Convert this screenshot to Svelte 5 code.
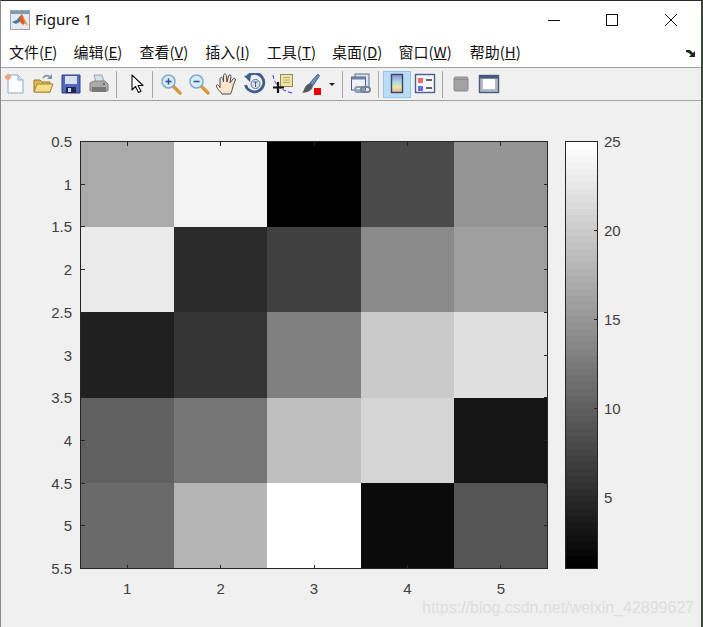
<script>
	// magic(5) shown with the gray colormap
	const magic = [
		[17, 24, 1, 8, 15],
		[23, 5, 7, 14, 16],
		[4, 6, 13, 20, 22],
		[10, 12, 19, 21, 3],
		[11, 18, 25, 2, 9],
	];
	const left = 80.5;
	const right = 547.5;
	const top = 141.5;
	const bottom = 568.5;
	const cw = (right - left) / 5;
	const ch = (bottom - top) / 5;

	function gray(v) {
		const c = Math.round(((v - 1) / 24) * 255);
		return `rgb(${c},${c},${c})`;
	}

	const yLabels = ["0.5", "1", "1.5", "2", "2.5", "3", "3.5", "4", "4.5", "5", "5.5"];
	const xLabels = [1, 2, 3, 4, 5];
	const barTicks = [5, 10, 15, 20, 25];
	const barSteps = Array.from({ length: 64 }, (_, i) => i);
	const barY = (v) => bottom - ((v - 1) / 24) * (bottom - top);

	const menus = [
		["文件", "F", 16],
		["编辑", "E", 17],
		["查看", "V", 17],
		["插入", "I", 17],
		["工具", "T", 16],
		["桌面", "D", 16],
		["窗口", "W", 18],
		["帮助", "H", 0],
	];
</script>

<div class="window">
	<header class="title">
		<svg class="logo" width="20" height="20" viewBox="0 0 20 20">
			<rect x="0.5" y="0.5" width="19" height="19" fill="#e6e9ed" stroke="#a0a4aa" />
			<rect x="1" y="1" width="18" height="3" fill="#7f9ab4" />
			<path d="M2 12l5-2 3-4 2-2 3 6 3 6-3-3-2 2-3-3-3 1z" fill="#d9622b" />
			<path d="M2 12l5-2 3-4-1 6-3 2z" fill="#3d7fb5" />
			<path d="M12 4l3 6 3 6-3-3z" fill="#f2a23a" />
		</svg>
		<span class="name">Figure 1</span>
		<div class="controls">
			<svg width="14" height="14" viewBox="0 0 14 14" class="min"><path d="M1 7.5h12" stroke="#111" /></svg>
			<svg width="14" height="14" viewBox="0 0 14 14" class="max"><rect x="1.5" y="1.5" width="11" height="11" fill="none" stroke="#111" /></svg>
			<svg width="14" height="14" viewBox="0 0 14 14" class="close"><path d="M1 1l12 12M13 1L1 13" stroke="#111" /></svg>
		</div>
	</header>

	<nav class="menu">
		{#each menus as [label, key, gap]}
			<span class="item" style="margin-right: {gap}px">{label}(<u>{key}</u>)</span>
		{/each}
		<svg class="dock" width="10" height="9" viewBox="0 0 10 9"><path d="M0 1l4 0 3 3 2-2v6H3l2-2-2-2-3-1z" fill="#222" /></svg>
	</nav>

	<div class="toolbar">
		<button>
			<svg width="22" height="22" viewBox="0 0 22 22">
				<path d="M4 2h10l5 5v13H4z" fill="#fbfdff" stroke="#8aa8cc" />
				<path d="M14 2v5h5" fill="#d6e4f5" stroke="#8aa8cc" />
				<circle cx="4" cy="4" r="2.6" fill="#ee8f5c" />
				<path d="M4 0v8M0 4h8" stroke="#f2b38e" />
			</svg>
		</button>
		<button>
			<svg width="22" height="22" viewBox="0 0 22 22">
				<path d="M2 7h6l2 2h8v10H2z" fill="#e0b94e" stroke="#9a7a26" />
				<path d="M2 19l3-8h16l-3 8z" fill="#f6de8b" stroke="#a8862e" />
				<path d="M11 5c2-3 5-3 7-1" fill="none" stroke="#7d93a8" stroke-width="1.6" />
				<path d="M20 1v5h-5z" fill="#7d93a8" />
			</svg>
		</button>
		<button>
			<svg width="22" height="22" viewBox="0 0 22 22">
				<path d="M2 2h18v18H2z" fill="#5468bc" stroke="#2f3d88" />
				<rect x="5" y="3" width="12" height="8" fill="#d8dff0" />
				<rect x="6" y="14" width="10" height="6" fill="#23274f" />
				<rect x="8" y="15" width="3" height="4" fill="#cfd6e6" />
			</svg>
		</button>
		<button>
			<svg width="22" height="22" viewBox="0 0 22 22">
				<path d="M6 2h8l2 7H8z" fill="#d5e2ea" stroke="#9aa6ae" />
				<path d="M2 10l4-2h11l3 3v7H2z" fill="#a9abab" stroke="#808080" />
				<rect x="4" y="14" width="14" height="5" fill="#787a7a" />
				<circle cx="16" cy="11" r="1" fill="#555" />
			</svg>
		</button>

		<span class="sep"></span>

		<button class="pointer">
			<svg width="22" height="22" viewBox="0 0 22 22">
				<path d="M6 2v15l3.500-3.500 3 6 2.500-1.300-3-5.700h5z" fill="#fff" stroke="#111" stroke-width="1.100" stroke-linejoin="round" />
			</svg>
		</button>

		<span class="sep"></span>

		<button>
			<svg width="22" height="22" viewBox="0 0 22 22">
				<path d="M13 13l7 7" stroke="#d6983c" stroke-width="3.400" stroke-linecap="round" />
				<circle cx="8.500" cy="8.500" r="6.500" fill="#d6ebf8" stroke="#86aaca" stroke-width="1.500" />
				<path d="M5.500 8.500h6M8.500 5.500v6" stroke="#2c4f8c" stroke-width="1.500" />
			</svg>
		</button>
		<button>
			<svg width="22" height="22" viewBox="0 0 22 22">
				<path d="M13 13l7 7" stroke="#d6983c" stroke-width="3.400" stroke-linecap="round" />
				<circle cx="8.500" cy="8.500" r="6.500" fill="#d6ebf8" stroke="#86aaca" stroke-width="1.500" />
				<path d="M5.500 8.500h6" stroke="#2c4f8c" stroke-width="1.500" />
			</svg>
		</button>
		<button>
			<svg width="22" height="22" viewBox="0 0 22 22">
				<path d="M6 21c-2-3-6-6-5.500-8.500s3 1 3.500 2V6c0-2.200 2.500-2.200 3 0l.5 3V2.500c0-2 2.800-2 2.800 0L11 9l1.500-6c.5-1.800 2.800-1.500 2.500.4L14 10l3-4c1-1.400 3-.5 2.400 1L17 13c-.5 3-1.500 6-2.500 8z" fill="#fbe3cc" stroke="#4a4a55" stroke-linejoin="round" />
			</svg>
		</button>
		<button>
			<svg width="22" height="22" viewBox="0 0 22 22">
				<path d="M3 4a9.300 9.300 0 1 1-1.500 8" fill="none" stroke="#3e5f8e" stroke-width="2.800" />
				<path d="M0 3l7-1-1 7z" fill="#3e5f8e" />
				<circle cx="11.500" cy="11" r="4.500" fill="#d6dfea" stroke="#5b7396" />
				<path d="M9.500 9h4M11.500 9v5" stroke="#3e5f8e" />
			</svg>
		</button>
		<button>
			<svg width="22" height="22" viewBox="0 0 22 22">
				<path d="M1 2c1 8 6 15 19 18" fill="none" stroke="#3b3bd0" stroke-dasharray="4 2" />
				<rect x="8.500" y="1.500" width="12" height="12" fill="#f3e6a4" stroke="#8e8a62" />
				<path d="M11 4.500h7M11 7h7M11 9.500h7" stroke="#b4ad78" />
				<path d="M6 9v11M1 14.500h11" stroke="#111" stroke-width="2.200" />
			</svg>
		</button>
		<button>
			<svg width="22" height="22" viewBox="0 0 22 22">
				<path d="M10 10l7-8c1-1.200 3-.2 2 1.500l-6 9z" fill="#6f8fc6" stroke="#44597f" />
				<path d="M10 10l3 3c-.5 3-3 5-5.500 6L2 20c2.500-2 2-8 8-10z" fill="#55585c" />
				<rect x="14" y="15" width="7" height="7" fill="#f00000" />
			</svg>
		</button>
		<svg class="caret" width="14" height="22" viewBox="0 0 14 22"><path d="M4 10h6l-3 3z" fill="#222" /></svg>

		<span class="sep"></span>

		<button>
			<svg width="22" height="22" viewBox="0 0 22 22">
				<rect x="5" y="1" width="14" height="13" fill="#dfe4ee" stroke="#5a6c8e" />
				<rect x="1.500" y="4" width="14" height="13" fill="#eef1f6" stroke="#4c5f84" />
				<rect x="1.500" y="4" width="14" height="2.500" fill="#6f82a5" />
				<rect x="5" y="14" width="9" height="5" rx="2.500" fill="none" stroke="#8d9bb0" stroke-width="2" />
				<rect x="11" y="14" width="9" height="5" rx="2.500" fill="none" stroke="#75859e" stroke-width="2" />
			</svg>
		</button>

		<span class="sep"></span>

		<button class="active">
			<svg width="22" height="22" viewBox="0 0 22 22">
				<defs>
					<linearGradient id="rainbow" x1="0" y1="0" x2="0" y2="1">
						<stop offset="0" stop-color="#8f8fd8" />
						<stop offset="0.4" stop-color="#a8d8e0" />
						<stop offset="0.7" stop-color="#e8e8a8" />
						<stop offset="1" stop-color="#f0a898" />
					</linearGradient>
				</defs>
				<rect x="5.500" y="1.500" width="11" height="18" fill="url(#rainbow)" stroke="#3c4664" stroke-width="1.400" />
			</svg>
		</button>
		<button>
			<svg width="22" height="22" viewBox="0 0 22 22">
				<rect x="1.500" y="1.500" width="19" height="18" fill="#f4f6fa" stroke="#4c5f84" stroke-width="1.400" />
				<rect x="4" y="5" width="5" height="5" fill="#ee6a6a" />
				<rect x="4" y="13" width="5" height="5" fill="#6a6ae8" />
				<path d="M12 7h6M12 15h6" stroke="#333" stroke-width="1.500" />
			</svg>
		</button>

		<span class="sep"></span>

		<button>
			<svg width="22" height="22" viewBox="0 0 22 22">
				<rect x="4" y="4" width="14" height="14" rx="1.500" fill="#a2a2a2" stroke="#8a8a8a" />
				<path d="M4 6.500h14" stroke="#8a8a8a" />
			</svg>
		</button>
		<button>
			<svg width="22" height="22" viewBox="0 0 22 22">
				<rect x="1.500" y="2.500" width="19" height="17" fill="#b4b9c4" stroke="#46597e" stroke-width="1.400" />
				<rect x="1.500" y="2.500" width="19" height="3" fill="#46597e" />
				<rect x="5" y="6" width="12" height="10" fill="#fff" />
			</svg>
		</button>
	</div>

	<main class="figure">
		<svg class="plot" width="700" height="526" viewBox="1 101 700 526">
			<g shape-rendering="crispEdges">
				{#each magic as row, r}
					{#each row as v, c}
						<rect x={left + c * cw} y={top + r * ch} width={cw + 0.5} height={ch + 0.5} fill={gray(v)} />
					{/each}
				{/each}
				{#each barSteps as i}
					<rect x="565.500" y={bottom - ((i + 1) / 64) * (bottom - top)} width="32" height={(bottom - top) / 64 + 0.6} fill={gray(1 + (i / 63) * 24)} />
				{/each}
				<rect x={left} y={top} width={right - left} height={bottom - top} fill="none" stroke="#262626" />
				<rect x="565.500" y={top} width="32" height={bottom - top} fill="none" stroke="#262626" />
				{#each yLabels as _, i}
					{@const y = top + (i * (bottom - top)) / 10}
					<path d="M{left} {y}h4M{right} {y}h-4" stroke="#262626" />
				{/each}
				{#each xLabels as n}
					{@const x = left + (n - 0.5) * cw}
					<path d="M{x} {top}v4M{x} {bottom}v-4" stroke="#262626" />
				{/each}
				{#each barTicks as v}
					<path d="M597.500 {barY(v)}h-4" stroke="#262626" />
				{/each}
			</g>
			{#each yLabels as label, i}
				<text class="tick" x="72" y={top + (i * (bottom - top)) / 10 + 5.500} text-anchor="end">{label}</text>
			{/each}
			{#each xLabels as n}
				<text class="tick" x={left + (n - 0.5) * cw} y="594" text-anchor="middle">{n}</text>
			{/each}
			{#each barTicks as v}
				<text class="tick" x="604" y={barY(v) + 5.500}>{v}</text>
			{/each}
		</svg>
		<span class="mark">https://blog.csdn.net/weixin_42899627</span>
	</main>
</div>

<style>
	:global(body) {
		margin: 0;
		background: #f0f0f0;
	}
	.window {
		width: 703px;
		height: 627px;
		box-sizing: border-box;
		overflow: hidden;
		display: flex;
		flex-direction: column;
		border-top: 1px solid #2b2a28;
		border-left: 1px solid #8a8a8a;
		border-right: 2px solid #3f443f;
		font-family: "Noto Sans", sans-serif;
		color: #111;
		background: #f0f0f0;
	}
	.title {
		height: 37px;
		flex: none;
		background: #fff;
		display: flex;
		align-items: center;
		padding-left: 9px;
		box-sizing: border-box;
	}
	.logo {
		margin-right: 5px;
	}
	.name {
		font-size: 15px;
		margin-top: -2px;
	}
	.controls {
		margin-left: auto;
		display: flex;
	}
	.controls svg {
		display: block;
	}
	.min {
		margin-right: 44px;
	}
	.max {
		margin-right: 45px;
	}
	.close {
		margin-right: 23px;
	}
	.menu {
		height: 29px;
		flex: none;
		box-sizing: content-box;
		background: #fff;
		display: flex;
		align-items: center;
		padding-left: 8px;
		border-bottom: 1px solid #a3a3a3;
		font-family: "Noto Sans CJK SC", "Noto Sans", sans-serif;
		font-size: 15px;
		color: #111;
	}
	.item {
		white-space: nowrap;
		margin-top: -2px;
	}
	.dock {
		margin-left: auto;
		margin-right: 5px;
		margin-top: 2px;
	}
	.toolbar {
		height: 32px;
		flex: none;
		display: flex;
		align-items: center;
		border-bottom: 1px solid #a3a3a3;
		background: #f0f0f0;
	}
	.toolbar button {
		width: 28px;
		height: 27px;
		padding: 0;
		border: 1px solid transparent;
		background: none;
		display: flex;
		align-items: center;
		justify-content: center;
		box-sizing: border-box;
		flex: none;
	}
	.toolbar .pointer {
		margin: 0 -2px 0 2px;
	}
	.toolbar .active {
		background: #bcdcf4;
		border-color: #8ec6f0;
	}
	.sep {
		width: 1px;
		height: 27px;
		background: #a8a8a8;
		margin: 0 4px 0 3px;
		flex: none;
	}
	.caret {
		flex: none;
	}
	.figure {
		flex: 1;
		position: relative;
	}
	.plot {
		display: block;
	}
	.tick {
		font-family: "Liberation Sans", Arial, sans-serif;
		font-size: 15px;
		fill: #404040;
	}
	.mark {
		position: absolute;
		left: 421px;
		top: 498px;
		font-family: "Liberation Sans", Arial, sans-serif;
		font-size: 16px;
		color: #dedede;
		white-space: nowrap;
	}
</style>
